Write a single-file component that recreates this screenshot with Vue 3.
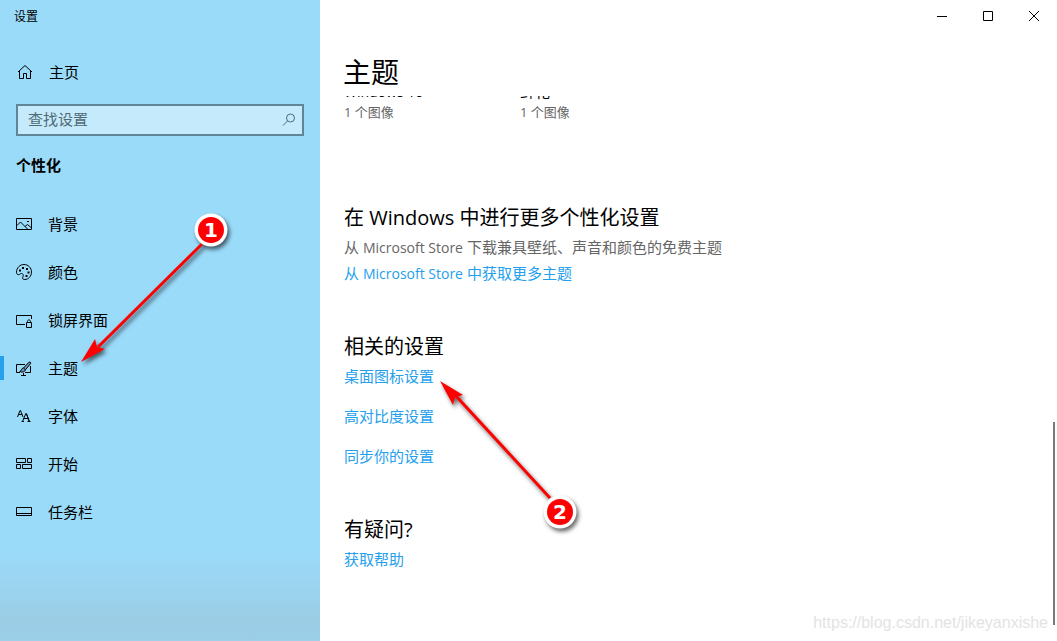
<script setup>
import { ref } from 'vue'

const query = ref('')
const active = ref('themes')

const navItems = [
  { id: 'background', label: '背景' },
  { id: 'colors', label: '颜色' },
  { id: 'lock', label: '锁屏界面' },
  { id: 'themes', label: '主题' },
  { id: 'fonts', label: '字体' },
  { id: 'start', label: '开始' },
  { id: 'taskbar', label: '任务栏' },
]

const themes = [
  { name: 'Windows 10', count: '1 个图像', latin: true },
  { name: '鲜花', count: '1 个图像', latin: false },
]

const relatedLinks = ['桌面图标设置', '高对比度设置', '同步你的设置']
</script>

<template>
  <div class="window">
    <aside class="sidebar">
      <div class="app-name">设置</div>
      <button type="button" class="home">
        <svg class="icon" viewBox="0 0 16 16" aria-hidden="true">
          <path d="M1 8 8 1.500 15 8M2.500 7V14.500H6.500V9.500H9.500V14.500H13.500V7" />
        </svg>
        <span>主页</span>
      </button>
      <div class="search">
        <input v-model="query" type="text" placeholder="查找设置" aria-label="查找设置" />
        <svg class="search-icon" viewBox="0 0 14 14" aria-hidden="true">
          <circle cx="8.500" cy="5" r="4" />
          <path d="M5.500 8 1 12.500" />
        </svg>
      </div>
      <h2 class="category">个性化</h2>
      <nav>
        <button
          v-for="item in navItems"
          :key="item.id"
          type="button"
          class="nav-item"
          :class="{ active: item.id === active }"
          @click="active = item.id"
        >
          <svg class="icon" viewBox="0 0 16 16" aria-hidden="true">
            <template v-if="item.id === 'background'">
              <path d="M.5 2.500H15.500V13.500H.5ZM1 9.500 4.500 6 11.500 13M9 10.500 11.500 8.500 15 11.500" />
              <path d="M11 5.500H13" />
            </template>
            <template v-else-if="item.id === 'colors'">
              <path d="M.5 8.200C.5 3.800 3.800.5 8 .5S15.500 3.800 15.500 8 12.500 15.500 8.800 15.500C6.500 15.500 6.200 14.300 6.900 12.800 7.700 11 7 9.500 5.500 9.500 4.300 9.500 4 10.700 2.500 10.700 1.200 10.700.5 9.500.5 8.200Z" />
              <path class="solid" d="M3 5.500h2v2H3zM6 3h2v2H6zM10 4h2v2h-2zM11.500 7.500h2v2h-2zM9.500 11h2v2h-2z" />
            </template>
            <template v-else-if="item.id === 'lock'">
              <path d="M9 12.500H.5V3.500H15.500V7M10.500 10.500H15.500V15.500H10.500ZM11.500 10.500V9.500C11.500 7.300 14.500 7.300 14.500 9.500V10.500" />
            </template>
            <template v-else-if="item.id === 'themes'">
              <path d="M9 4.500H.5V12.500H4M9 12.500H14.500V6M7.500 13V15.500M5 15.500H10" />
              <path class="brush" d="M13 2.200C14 1.500 15.300 2.500 14.500 3.700L9.500 9.700 7.500 8ZM7.500 8C5 8.200 6 11 3.700 11.500 6 12.800 9 12 9.500 9.700" />
            </template>
            <template v-else-if="item.id === 'fonts'">
              <path d="M1.500 9 4 2.500H4.500L7 9M2.500 6.500H6" />
              <path d="M6.500 13.500 9.800 5.500H10.300L13.500 13.500M7.500 10.500H12M5.500 13.500H8M11.500 13.500H14.500" />
              <path d="M10.500 6 13 13" />
            </template>
            <template v-else-if="item.id === 'start'">
              <path d="M.5 2.500H9.500V6.500H.5ZM11.500 2.500H15.500V6.500H11.500ZM.5 8.500H4.500V12.500H.5ZM6.500 8.500H15.500V12.500H6.500Z" />
            </template>
            <template v-else>
              <path d="M.5 3.500H15.500V11.500H.5ZM.5 9.500H15.500" />
            </template>
          </svg>
          <span>{{ item.label }}</span>
        </button>
      </nav>
    </aside>

    <main class="content">
      <header class="title-bar">
        <button type="button" aria-label="最小化">
          <svg viewBox="0 0 10 10"><path d="M0 5.500H10" /></svg>
        </button>
        <button type="button" aria-label="最大化">
          <svg viewBox="0 0 10 10"><path d="M.5.5H9.500V9.500H.5Z" /></svg>
        </button>
        <button type="button" aria-label="关闭">
          <svg viewBox="0 0 10 10"><path d="M0 0 10 10M10 0 0 10" /></svg>
        </button>
      </header>
      <h1>主题</h1>
      <div class="scroller">
        <div class="themes">
          <div v-for="theme in themes" :key="theme.name" class="theme">
            <div class="theme-name"><span :class="{ latin: theme.latin }">{{ theme.name }}</span></div>
            <div class="theme-count">{{ theme.count }}</div>
          </div>
        </div>
        <section>
          <h2>在 Windows 中进行更多个性化设置</h2>
          <p>从 <span class="latin">Microsoft Store</span> 下载兼具壁纸、声音和颜色的免费主题</p>
          <a href="#store">从 <span class="latin">Microsoft Store</span> 中获取更多主题</a>
        </section>
        <section>
          <h2>相关的设置</h2>
          <ul>
            <li v-for="link in relatedLinks" :key="link">
              <a href="#related">{{ link }}</a>
            </li>
          </ul>
        </section>
        <section>
          <h2>有疑问?</h2>
          <a href="#help">获取帮助</a>
        </section>
      </div>
      <div class="scrollbar"></div>
      <div class="watermark">https://blog.csdn.net/jikeyanxishe</div>
    </main>

    <svg class="callouts" width="600" height="560" aria-hidden="true">
      <g class="shadowed">
        <path class="shaft" d="M202 244 98 347" />
        <path class="tip" d="M81 362 95 339 97 347 105 349Z" />
        <circle class="ring" cx="211" cy="230" r="16.500" />
        <circle class="dot" cx="211" cy="230" r="13" />
      </g>
      <text x="211" y="237">1</text>
      <g class="shadowed">
        <path class="shaft" d="M550 498 456 396" />
        <path class="tip" d="M440 381 463 395 455 397 453 405Z" />
        <circle class="ring" cx="560" cy="512" r="16.500" />
        <circle class="dot" cx="560" cy="512" r="13" />
      </g>
      <text x="560" y="519">2</text>
    </svg>
  </div>
</template>

<style>
body {
  margin: 0;
}
</style>

<style scoped>
.window {
  position: relative;
  display: flex;
  min-height: 100vh;
  background: #fff;
  color: #000;
  font-family: "Open Sans", "Noto Sans CJK SC", sans-serif;
  font-size: 15px;
  line-height: 24px;
}
h1,
h2,
p,
ul {
  margin: 0;
  padding: 0;
  font-weight: 400;
}
button {
  border: 0;
  padding: 0;
  background: none;
  color: inherit;
  font: inherit;
}
svg {
  fill: none;
  stroke: #000;
  stroke-width: 1;
}
.sidebar {
  box-sizing: border-box;
  flex: 0 0 320px;
  background: linear-gradient(#9bdbfa, #9bdbfa calc(100% - 90px), #9bcde5 calc(100% - 20px), #9bcfe7);
}
.app-name {
  padding: 5px 14px 3px;
  font-size: 12px;
}
.home,
.nav-item {
  display: flex;
  align-items: center;
  gap: 16px;
  width: 100%;
  height: 48px;
  padding: 0 16px;
  text-align: left;
}
.home {
  margin: 16px 0 8px;
  padding-left: 17px;
}
.icon {
  flex: none;
  width: 16px;
  height: 16px;
}
.solid {
  fill: #000;
  stroke: none;
}
.brush {
  fill: rgba(0, 0, 0, 0.3);
}
.search {
  display: flex;
  align-items: center;
  box-sizing: border-box;
  height: 32px;
  margin: 0 16px;
  padding: 0 6px 0 10px;
  border: 2px solid #5f8698;
  background: #c5eafb;
}
.search input {
  flex: 1;
  min-width: 0;
  padding: 0 0 2px;
  border: 0;
  outline: 0;
  background: none;
  color: #000;
  font: inherit;
}
.search input::placeholder {
  color: #4f6a76;
  opacity: 1;
}
.search-icon {
  width: 14px;
  height: 14px;
  stroke: #4f6a76;
}
.category {
  margin: 17px 16px 23px;
  font-size: 15px;
  font-weight: 700;
}
.nav-item {
  position: relative;
}
.nav-item.active::before {
  content: "";
  position: absolute;
  left: 0;
  top: 12px;
  width: 4px;
  height: 24px;
  background: #24a0ed;
}
.content {
  position: relative;
  flex: 1;
  min-width: 0;
}
.title-bar {
  display: flex;
  justify-content: flex-end;
}
.title-bar button {
  display: flex;
  align-items: center;
  justify-content: center;
  width: 46px;
  height: 32px;
}
.title-bar svg {
  width: 10px;
  height: 10px;
}
h1 {
  margin: 20px 23px 4px;
  font-size: 28px;
  line-height: 40px;
}
.scroller {
  overflow: hidden;
  padding: 0 24px;
}
.themes {
  display: flex;
  margin: -14px 0 78px;
}
.theme {
  width: 176px;
}
.theme-name {
  line-height: 18px;
}
.theme-count {
  color: #666;
  font-size: 13px;
}
section {
  margin-bottom: 46px;
}
section h2 {
  margin-bottom: 1px;
  font-size: 20px;
  line-height: 32px;
}
section p {
  margin-bottom: 2px;
  color: #666;
}
.latin {
  font-size: 14px;
  line-height: 1;
}
a {
  color: #24a0ed;
  text-decoration: none;
}
ul {
  display: grid;
  gap: 16px;
  list-style: none;
}
.scrollbar {
  position: absolute;
  right: 2px;
  bottom: 16px;
  width: 2px;
  height: 203px;
  background: #7a7a7a;
}
.watermark {
  position: absolute;
  right: 9px;
  bottom: 6px;
  color: #e3e3e3;
  font-family: "Liberation Sans", sans-serif;
  font-size: 16px;
}
.callouts {
  position: absolute;
  left: 0;
  top: 0;
  pointer-events: none;
}
.shadowed {
  filter: drop-shadow(2px 3px 2px rgba(0, 0, 0, 0.6));
}
.shaft {
  stroke: #f00;
  stroke-width: 3;
}
.tip,
.dot {
  fill: #f00;
  stroke: none;
}
.ring {
  fill: #fff;
  stroke: none;
}
.callouts text {
  fill: #fff;
  stroke: none;
  font-family: "DejaVu Sans", sans-serif;
  font-size: 20px;
  font-weight: 700;
  text-anchor: middle;
}
</style>
